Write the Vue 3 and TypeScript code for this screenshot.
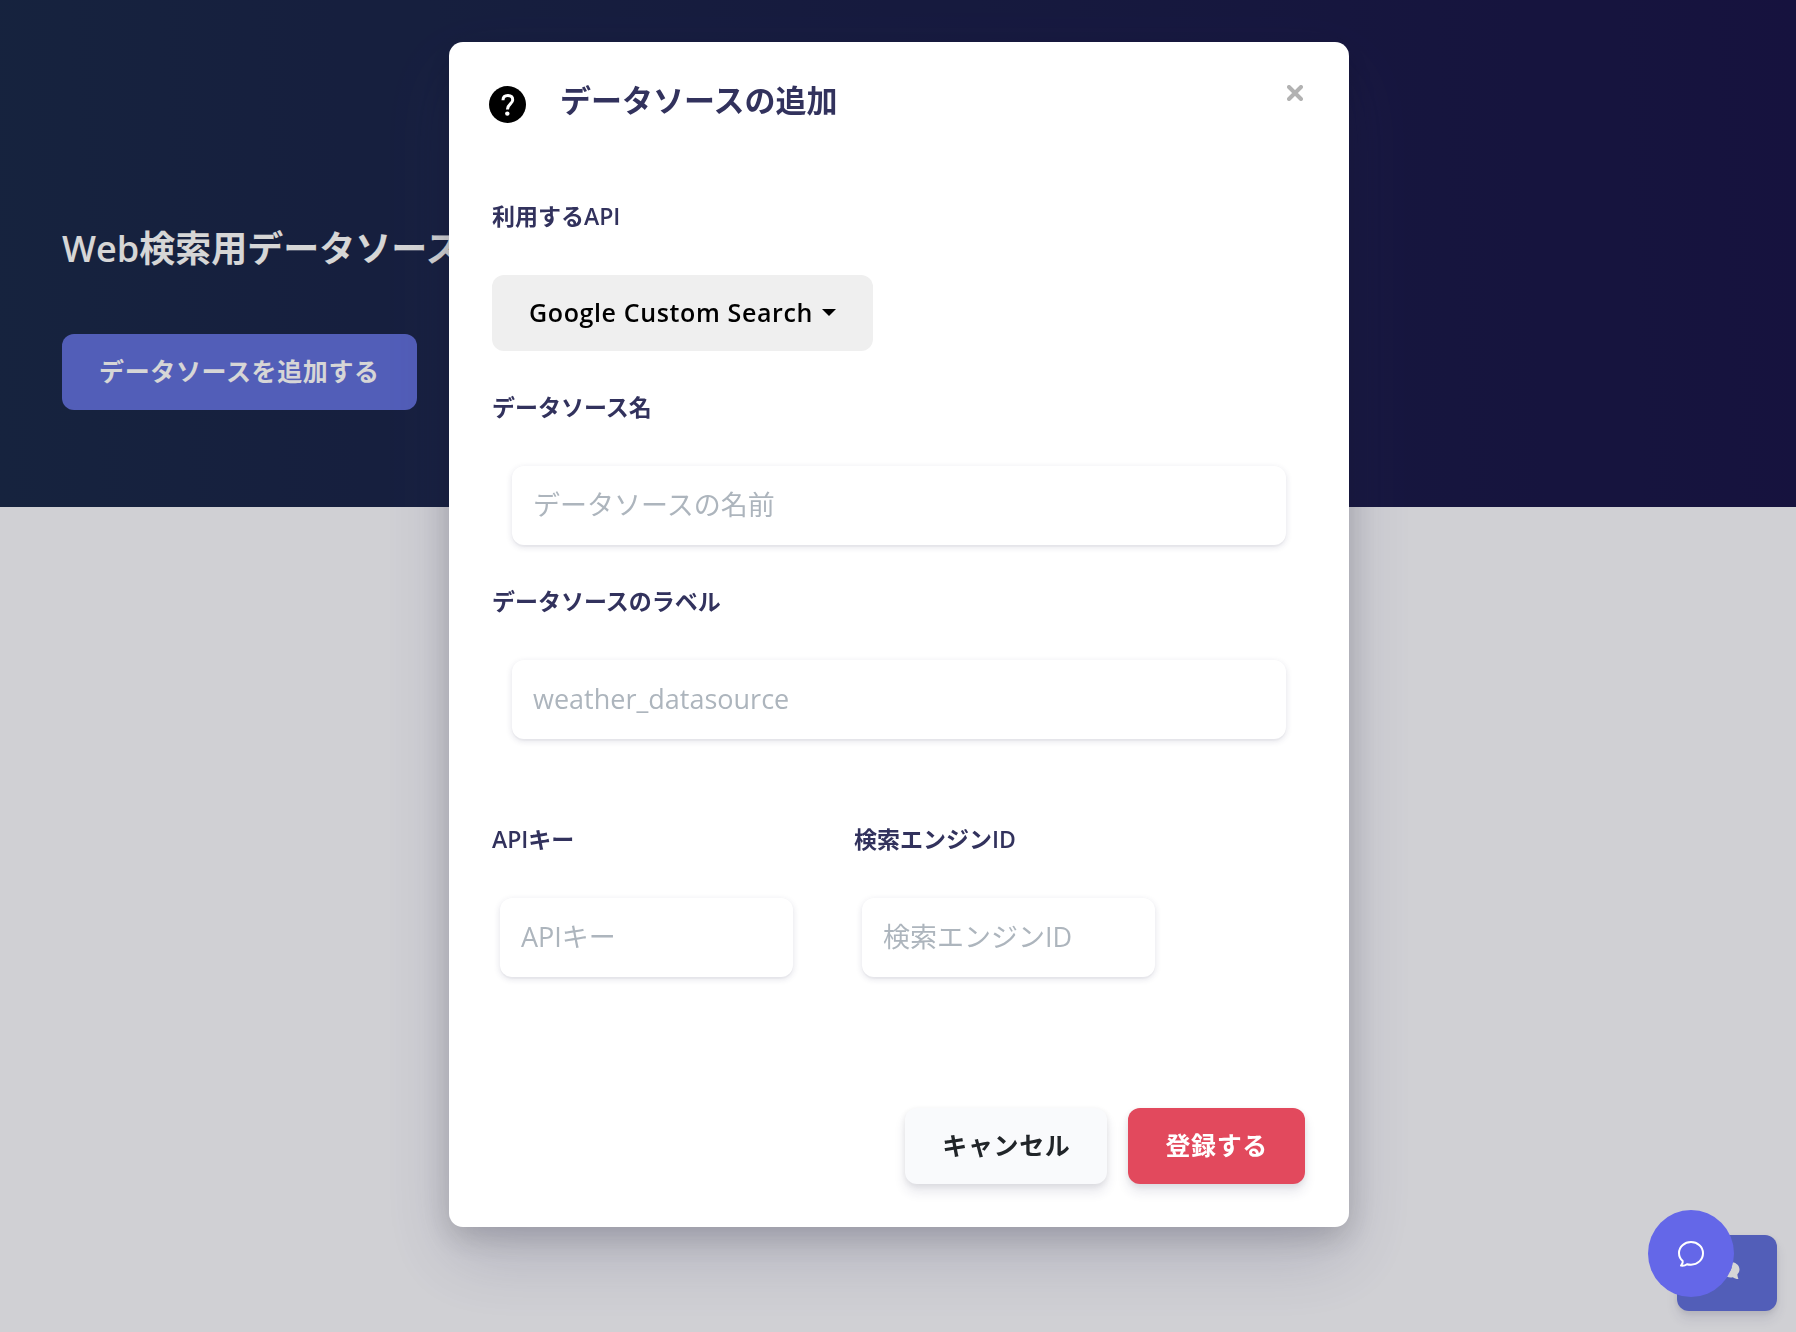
<script setup lang="ts">
import { ref } from 'vue'

const api = ref('google')
const name = ref('')
const label = ref('')
const apiKey = ref('')
const engineId = ref('')
</script>

<template>
  <div class="page">
    <header class="hero">
      <h1>Web検索用データソース</h1>
      <button type="button" class="btn btn-primary">データソースを追加する</button>
    </header>
    <button type="button" class="btn btn-primary support" aria-label="サポート">
      <svg viewBox="0 0 26 24" width="26" height="24" aria-hidden="true">
        <path d="M9 0C4 0 .5 3 .5 6.800c0 1.700.7 3.200 1.900 4.400C2.200 12.700.9 14.300.9 14.300c2 0 3.700-.8 4.700-1.500 1 .4 2.200.6 3.400.6 5 0 9-3 9-6.700S14 0 9 0z" fill="#fff" />
        <path d="M18 4c5 1 7.500 4 7.500 7.500 0 2-.9 3.600-2.100 4.800 0 2 .5 3.200 1 4.700-2.200 0-4.100-.8-5.500-1.800C13 20 10 18 9 16c6 0 10-4.500 9-12z" fill="#fff" />
      </svg>
    </button>
  </div>

  <div class="overlay">
    <form class="modal" role="dialog" aria-labelledby="modal-title" @submit.prevent>
      <div class="modal-header">
        <svg class="help" viewBox="0 0 37 37" width="37" height="37" aria-hidden="true">
          <circle cx="18.500" cy="18.500" r="18.500" />
          <path d="M14 14.200c0-3 1.900-4.600 4.900-4.600 2.900 0 4.800 1.700 4.800 4.300 0 3.800-5.300 4.200-5.300 9.500" fill="none" stroke="#fff" stroke-width="3" />
          <circle cx="18.300" cy="27.600" r="2.200" fill="#fff" />
        </svg>
        <h2 id="modal-title">データソースの追加</h2>
        <button type="button" class="close" aria-label="閉じる">
          <svg viewBox="0 0 16 16" width="16" height="16" aria-hidden="true">
            <path d="M2 2l12 12M14 2L2 14" stroke="#b2b2b2" stroke-width="4" stroke-linecap="round" />
          </svg>
        </button>
      </div>

      <div class="modal-body">
        <div class="field">
          <label for="api">利用するAPI</label>
          <div class="select">
            <select id="api" v-model="api" class="btn">
              <option value="google">Google Custom Search</option>
            </select>
            <svg viewBox="0 0 14 7" width="14" height="7" aria-hidden="true"><path d="M0 0h14L7 7z" /></svg>
          </div>
        </div>
        <div class="field">
          <label for="name">データソース名</label>
          <div class="inset">
            <input id="name" v-model="name" type="text" placeholder="データソースの名前" />
          </div>
        </div>
        <div class="field">
          <label for="label">データソースのラベル</label>
          <div class="inset">
            <input id="label" v-model="label" type="text" placeholder="weather_datasource" />
          </div>
        </div>
        <div class="keys">
          <div class="field">
            <label for="key">APIキー</label>
            <input id="key" v-model="apiKey" type="text" placeholder="APIキー" />
          </div>
          <div class="field">
            <label for="engine">検索エンジンID</label>
            <input id="engine" v-model="engineId" type="text" placeholder="検索エンジンID" />
          </div>
        </div>
      </div>

      <div class="modal-footer">
        <button type="button" class="btn btn-light">キャンセル</button>
        <button type="submit" class="btn btn-danger">登録する</button>
      </div>
    </form>
  </div>

  <button type="button" class="chat" aria-label="チャット">
    <svg viewBox="0 0 28 28" width="28" height="28" aria-hidden="true">
      <path d="M14 2C7.400 2 2 6.800 2 13c0 3.200 1.300 6 3.700 8 .6 1.800-.9 3.400-1.700 4.600 2.200.3 4.500-.2 6-1.400 1.300.4 2.600.5 4 .5 6.600 0 12-5 12-11.500S20.600 2 14 2z" fill="none" stroke="#fff" stroke-width="2" stroke-linejoin="round" />
    </svg>
  </button>
</template>

<style>
body {
  margin: 0;
  background: #f8f8fd;
}
</style>

<style scoped>
.page,
.overlay,
.chat {
  font-family: "Open Sans", "Noto Sans CJK JP", sans-serif;
}

.page {
  min-height: 100vh;
}

.hero {
  box-sizing: border-box;
  height: 507px;
  padding: 224px 62px 0;
  background: linear-gradient(87deg, #1b2a4b 0%, #1b164b 100%);
}

h1 {
  margin: 0 0 60px;
  color: #fff;
  font-size: 36px;
  font-weight: 600;
  line-height: 50px;
}

.btn {
  box-sizing: border-box;
  height: 76px;
  padding: 0 37px 2px;
  border: 0;
  border-radius: 12px;
  font-family: inherit;
  font-size: 25px;
  font-weight: 600;
  line-height: 36px;
  letter-spacing: 0.025em;
}

.btn-primary {
  background: #6270dc;
  color: #fff;
}

.support {
  position: fixed;
  right: 19px;
  bottom: 21px;
  width: 100px;
  box-shadow: 0 8px 12px rgba(50, 50, 93, 0.11), 0 2px 6px rgba(0, 0, 0, 0.08);
}

.overlay {
  position: absolute;
  inset: 0;
  display: flex;
  justify-content: center;
  align-items: flex-start;
  padding: 42px 0 0 2px;
  background: rgba(0, 0, 0, 0.16);
}

.modal {
  flex: 0 1 900px;
  border-radius: 14px;
  background: #fff;
  box-shadow: 0 30px 70px rgba(50, 50, 93, 0.2), 0 10px 30px rgba(0, 0, 0, 0.17);
}

.modal-header {
  display: flex;
  align-items: flex-start;
  padding: 40px 46px 0 40px;
}

.help {
  flex: none;
  margin: 4px 34px 0 0;
}

h2 {
  flex: 1;
  margin: 0;
  color: #32325d;
  font-size: 31px;
  font-weight: 600;
  line-height: 36px;
}

.close {
  display: flex;
  margin-top: 3px;
  padding: 0;
  border: 0;
  background: none;
}

.modal-body {
  display: flex;
  flex-direction: column;
  gap: 40px;
  padding: 77px 43px 0;
}

.field {
  display: flex;
  flex-direction: column;
  align-items: flex-start;
}

label {
  margin-bottom: 43px;
  color: #32325d;
  font-size: 23px;
  font-weight: 600;
  line-height: 32px;
}

.select {
  position: relative;
}

.select select {
  appearance: none;
  width: 381px;
  background: #efefef;
  color: #000;
}

.select svg {
  position: absolute;
  top: 34px;
  right: 37px;
  pointer-events: none;
}

.inset {
  align-self: stretch;
  display: flex;
  padding: 0 20px;
}

input {
  box-sizing: border-box;
  width: 100%;
  height: 79px;
  padding: 0 21px 2px;
  border: 0;
  border-radius: 12px;
  background: #fff;
  box-shadow: 0 2px 6px rgba(50, 50, 93, 0.15), 0 2px 0 rgba(0, 0, 0, 0.02);
  color: #8898aa;
  font-family: inherit;
  font-size: 27px;
}

input::placeholder {
  color: #adb5bd;
  opacity: 1;
}

.keys {
  display: flex;
  gap: 55px;
  padding-top: 44px;
}

.keys .field {
  width: 307px;
}

.keys input {
  width: 293px;
  margin-left: 8px;
}

.modal-footer {
  display: flex;
  justify-content: flex-end;
  gap: 21px;
  padding: 131px 44px 43px;
}

.btn-light {
  background: #f9fafc;
  color: #212529;
  box-shadow: 0 8px 12px rgba(50, 50, 93, 0.11), 0 2px 6px rgba(0, 0, 0, 0.08);
}

.btn-danger {
  background: #e2495d;
  color: #fff;
  box-shadow: 0 8px 12px rgba(50, 50, 93, 0.11), 0 2px 6px rgba(0, 0, 0, 0.08);
}

.chat {
  position: fixed;
  right: 62px;
  bottom: 35px;
  display: flex;
  align-items: center;
  justify-content: center;
  width: 86px;
  height: 87px;
  padding: 0;
  border: 0;
  border-radius: 50%;
  background: #6467e8;
}
</style>
